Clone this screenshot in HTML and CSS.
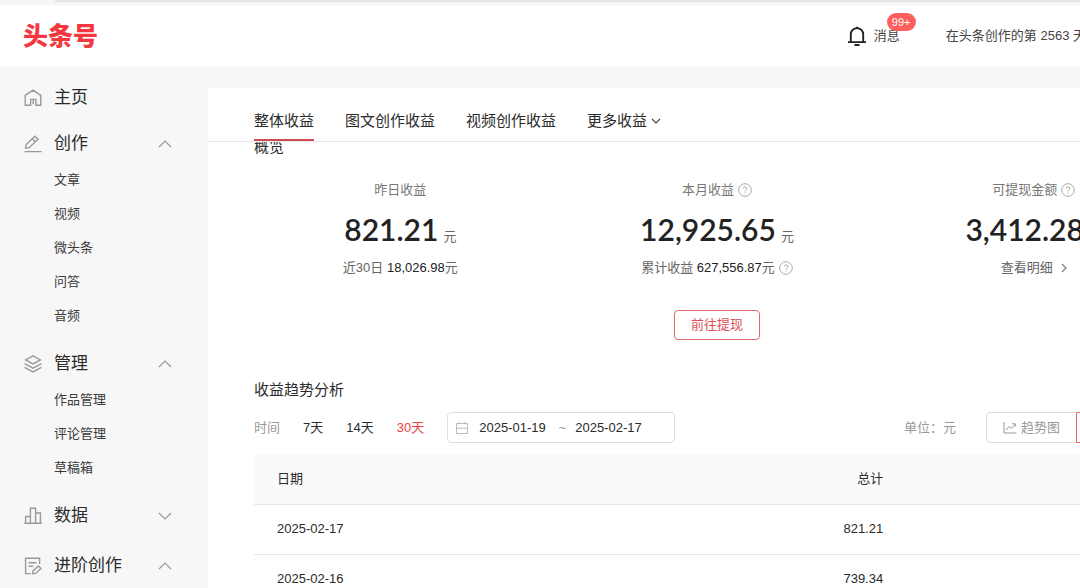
FILE: index.html
```html
<!DOCTYPE html>
<html lang="zh-CN">
<head>
<meta charset="utf-8">
<title>头条号</title>
<link rel="stylesheet" href="styles.css">
</head>
<body>
<div class="app">
  <div class="strip"><div class="strip-bar"></div></div>
  <header class="header">
    <a class="logo" href="#">头条号</a>
    <div class="header-right">
      <a class="messages" href="#">
        <svg class="bell" viewBox="0 0 20 20" fill="none" stroke="#222" stroke-width="1.9"><path d="M3.8 16V8.3a6.2 6.2 0 0 1 12.4 0V16M1 16.1h18M7.5 19h5M10 0.8v1.5"/></svg>
        <span class="messages-label">消息<span class="badge">99+</span></span>
      </a>
      <span class="days">在头条创作的第 2563 天</span>
    </div>
  </header>

  <div class="body">
    <nav class="sidebar">
      <a class="nav-main nav-home" href="#">
        <svg class="nav-icon" viewBox="0 0 18 18"><path d="M1.2 16.2V6.3L9 1.2l7.8 5.1v9.9h-4.9v-5.8H6.6v5.8zM9.2 10.6v4.6"/></svg>
        <span>主页</span>
      </a>
      <section class="nav-group">
        <button class="nav-main" type="button">
          <svg class="nav-icon" viewBox="0 0 18 18"><path d="M.5 16.6h17M1.6 13.2l.5-3.6 8.8-8.4 3.1 3-8.8 8.5zM8.3 3.8l3 3"/></svg>
          <span>创作</span>
          <svg class="chev" viewBox="0 0 14 8"><path d="M1 7l6-6 6 6"/></svg>
        </button>
        <a class="nav-sub" href="#">文章</a>
        <a class="nav-sub" href="#">视频</a>
        <a class="nav-sub" href="#">微头条</a>
        <a class="nav-sub" href="#">问答</a>
        <a class="nav-sub" href="#">音频</a>
      </section>
      <section class="nav-group">
        <button class="nav-main" type="button">
          <svg class="nav-icon" viewBox="0 0 18 18"><path d="M9 .9l7.4 4L9 8.9l-7.4-4zM.6 8.7L9 13.1l8.4-4.4M.6 12.4L9 16.9l8.4-4.5"/></svg>
          <span>管理</span>
          <svg class="chev" viewBox="0 0 14 8"><path d="M1 7l6-6 6 6"/></svg>
        </button>
        <a class="nav-sub" href="#">作品管理</a>
        <a class="nav-sub" href="#">评论管理</a>
        <a class="nav-sub" href="#">草稿箱</a>
      </section>
      <section class="nav-group">
        <button class="nav-main" type="button">
          <svg class="nav-icon" viewBox="0 0 18 18"><path d="M.3 16.3h17.4M1.6 16V9.5h4.7M6.4 16V1.2h5.2V16M11.7 6h4.7v10"/></svg>
          <span>数据</span>
          <svg class="chev" viewBox="0 0 14 8"><path d="M1 1l6 6 6-6"/></svg>
        </button>
      </section>
      <section class="nav-group">
        <button class="nav-main" type="button">
          <svg class="nav-icon" viewBox="0 0 18 18"><path d="M15.6 7V1.2H1.6v15.4h5M4.6 5.7h8M4.6 9.2h4.7M8.6 16.8l.4-2.9 5.4-4.9 2.6 2.5-5.4 4.9z"/></svg>
          <span>进阶创作</span>
          <svg class="chev" viewBox="0 0 14 8"><path d="M1 7l6-6 6 6"/></svg>
        </button>
      </section>
    </nav>

    <main class="panel">
      <nav class="tabs">
        <a class="tab tab-active" href="#">整体收益</a>
        <a class="tab" href="#">图文创作收益</a>
        <a class="tab" href="#">视频创作收益</a>
        <a class="tab" href="#">更多收益<svg class="tab-chev" viewBox="0 0 10 6"><path d="M1 1l4 4 4-4"/></svg></a>
      </nav>
      <div class="content">
        <h2 class="title title-overview">概览</h2>
        <div class="stats">
          <div class="stat">
            <div class="stat-label">昨日收益</div>
            <div class="stat-value"><strong>821.21</strong><span>元</span></div>
            <div class="stat-note"><span>近30日 <b>18,026.98</b>元</span></div>
          </div>
          <div class="stat">
            <div class="stat-label">本月收益<svg class="help" viewBox="0 0 14 14"><circle cx="7" cy="7" r="6.3"/><path d="M5.2 5.6a1.8 1.8 0 1 1 2.6 1.6q-.8.4-.8 1.3M7 9.5v1.1"/></svg></div>
            <div class="stat-value"><strong>12,925.65</strong><span>元</span></div>
            <div class="stat-note"><span>累计收益 <b>627,556.87</b>元</span><svg class="help" viewBox="0 0 14 14"><circle cx="7" cy="7" r="6.3"/><path d="M5.2 5.6a1.8 1.8 0 1 1 2.6 1.6q-.8.4-.8 1.3M7 9.5v1.1"/></svg></div>
          </div>
          <div class="stat">
            <div class="stat-label">可提现金额<svg class="help" viewBox="0 0 14 14"><circle cx="7" cy="7" r="6.3"/><path d="M5.2 5.6a1.8 1.8 0 1 1 2.6 1.6q-.8.4-.8 1.3M7 9.5v1.1"/></svg></div>
            <div class="stat-value"><strong>3,412.28</strong><span>元</span></div>
            <a class="stat-note" href="#">查看明细<svg class="more" viewBox="0 0 6 10"><path d="M1 1l4 4-4 4"/></svg></a>
          </div>
        </div>
        <div class="actions"><button class="withdraw" type="button">前往提现</button></div>

        <h2 class="title title-trend">收益趋势分析</h2>
        <div class="filters">
          <span class="muted">时间</span>
          <button class="range" type="button">7天</button>
          <button class="range" type="button">14天</button>
          <button class="range range-active" type="button">30天</button>
          <div class="dates">
            <svg class="calendar" viewBox="0 0 12 12"><path d="M.5 1.5h11v10H.5zM.5 6.2h11M3 0v2.5M9 0v2.5"/></svg>
            <input class="date" type="text" value="2025-01-19" aria-label="开始日期">
            <span class="tilde">~</span>
            <input class="date" type="text" value="2025-02-17" aria-label="结束日期">
          </div>
          <span class="muted unit">单位：元</span>
          <div class="views">
            <button class="view" type="button"><svg class="trend" viewBox="0 0 14 12"><path d="M1 0v11h12.5M3 8l3-3.5 2.3 2L12 2.2M9 1.8h3.3v3"/></svg>趋势图</button>
            <button class="view view-active" type="button" aria-label="表格"></button>
          </div>
        </div>
        <table class="table">
          <colgroup><col class="col-date"><col class="col-total"><col></colgroup>
          <thead><tr><th>日期</th><th class="num">总计</th><th></th></tr></thead>
          <tbody>
            <tr><td>2025-02-17</td><td class="num">821.21</td><td></td></tr>
            <tr><td>2025-02-16</td><td class="num">739.34</td><td></td></tr>
          </tbody>
        </table>
      </div>
    </main>
  </div>
</div>
</body>
</html>
```

FILE: styles.css
```css
* { box-sizing: border-box; }
body {
  margin: 0;
  color: #2b2b2b;
  background: #f7f7f7;
  font: 13px/20px "Liberation Sans", "Noto Sans CJK SC", sans-serif;
}
a { color: inherit; text-decoration: none; }
button, input {
  margin: 0;
  padding: 0;
  border: 0;
  background: none;
  color: inherit;
  font: inherit;
}
button { cursor: pointer; }
svg { flex: none; fill: none; }

.app { height: 100vh; overflow: hidden; }

.strip { height: 5px; background: #f6f6f6; padding-left: 55px; }
.strip-bar { height: 2px; background: #e6e6e6; }

.header {
  display: flex;
  align-items: center;
  justify-content: space-between;
  min-width: 1226px;
  height: 61px;
  padding: 0 140px 0 23px;
  background: #fff;
}
.logo { color: #f5383f; font-size: 25px; font-weight: 900; line-height: 36px; }
.header-right { display: flex; align-items: center; gap: 46px; color: #444; }
.messages { display: flex; align-items: center; gap: 7px; }
.bell { width: 20px; height: 20px; }
.messages-label { position: relative; }
.badge {
  position: absolute;
  left: 13px;
  bottom: 15px;
  padding: 0 5px;
  border-radius: 9px;
  background: #ff5e5e;
  color: #fff;
  font-size: 11px;
  line-height: 18px;
}

.body { display: flex; min-width: 1226px; }

.sidebar { width: 208px; padding: 13px 36px 0 24px; flex: none; }
.nav-main {
  display: flex;
  align-items: center;
  gap: 12px;
  width: 100%;
  height: 38px;
  font-size: 17px;
  text-align: left;
}
.nav-home { margin-bottom: 8px; }
.nav-group { margin-bottom: 12px; }
.nav-icon { width: 18px; height: 18px; stroke: #999; stroke-width: 1.4; }
.chev { width: 14px; height: 8px; margin-left: auto; stroke: #999; stroke-width: 1.2; }
.nav-sub { display: block; padding-left: 30px; line-height: 34px; color: #3a3a3a; }

.panel { flex: 1; margin-top: 22px; background: #fff; }
.tabs {
  position: relative;
  z-index: 1;
  display: flex;
  gap: 31px;
  height: 54px;
  padding: 14px 46px 0;
  border-bottom: 1px solid #e8e8e8;
  background: #fff;
}
.tab {
  display: flex;
  align-items: center;
  gap: 4px;
  border-bottom: 2px solid transparent;
  font-size: 15px;
}
.tab-active { border-color: #d04a50; }
.tab-chev { width: 10px; height: 6px; stroke: #444; stroke-width: 1.1; }

.content { padding: 0 46px; }
.title { margin: 0; font-size: 15px; font-weight: 400; line-height: 24px; }
.title-overview { margin-top: -7px; }
.title-trend { margin-top: 38px; }

.stats { display: grid; grid-template-columns: repeat(3, 1fr); margin: 21px -12px 0; }
.stat { display: flex; flex-direction: column; align-items: center; gap: 9px; color: #666; }
.stat-label, .stat-note { display: flex; align-items: center; gap: 4px; }
.stat-label { color: #777; }
.stat-value { display: flex; align-items: baseline; gap: 5px; }
.stat-value strong { color: #222; font: 600 30px/40px Lato, sans-serif; }
.stat-note b { color: #222; font-weight: 400; }
.help { width: 14px; height: 14px; stroke: #aaa; stroke-width: 1; }
.more { width: 6px; height: 10px; margin-left: 4px; stroke: #777; stroke-width: 1.1; }

.actions { display: flex; justify-content: center; margin-top: 32px; }
.withdraw {
  padding: 4px 16px;
  border: 1px solid #e0686c;
  border-radius: 4px;
  color: #dc4f55;
}

.filters { display: flex; align-items: center; margin-top: 10px; }
.muted { color: #999; }
.range { margin-left: 23px; }
.range-active { color: #f04142; }
.dates {
  display: flex;
  align-items: center;
  width: 228px;
  height: 31px;
  margin-left: 23px;
  padding: 0 8px;
  border: 1px solid #ddd;
  border-radius: 4px;
}
.calendar { width: 12px; height: 12px; margin-right: 11px; stroke: #bbb; }
.date { width: 70px; }
.tilde { width: 26px; color: #999; text-align: center; }
.unit { margin-left: auto; }
.views { display: flex; margin-left: 30px; }
.view {
  display: flex;
  align-items: center;
  gap: 4px;
  height: 31px;
  padding: 0 16px;
  border: 1px solid #ddd;
  border-radius: 4px 0 0 4px;
  color: #999;
}
.view-active { width: 104px; margin-left: -1px; border-color: #e0686c; border-radius: 0 4px 4px 0; }
.trend { width: 14px; height: 12px; stroke: #999; }

.table { width: 100%; margin-top: 11px; border-collapse: collapse; table-layout: fixed; }
.col-date { width: 40%; }
.col-total { width: 30%; }
.table th, .table td {
  height: 50px;
  padding: 0 19px 0 23px;
  border-bottom: 1px solid #e8e8e8;
  font-weight: 400;
  text-align: left;
}
.table th { background: #fafafa; }
.table .num { text-align: right; }
```
